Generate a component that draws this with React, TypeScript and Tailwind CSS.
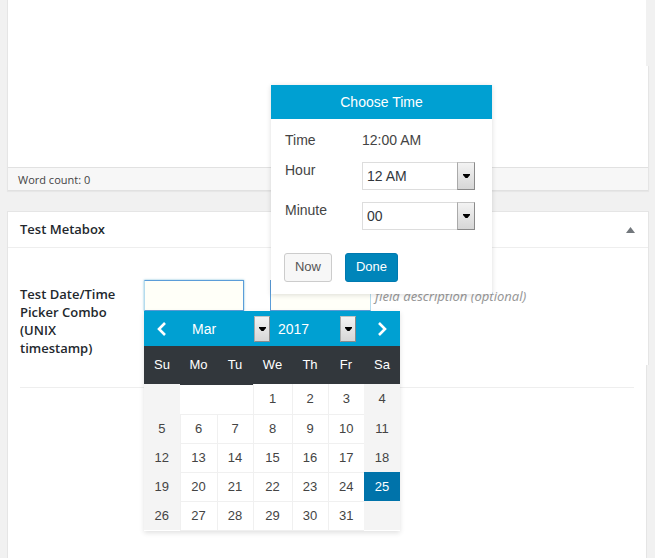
import React from "react";

const sans = "font-['Liberation_Sans',Arial,sans-serif]";

const weekdays = ["Su", "Mo", "Tu", "We", "Th", "Fr", "Sa"];
const weeks: (number | null)[][] = [
  [null, null, null, 1, 2, 3, 4],
  [5, 6, 7, 8, 9, 10, 11],
  [12, 13, 14, 15, 16, 17, 18],
  [19, 20, 21, 22, 23, 24, 25],
  [26, 27, 28, 29, 30, 31, null],
];

function DropButton({ tall }: { tall?: boolean }) {
  return (
    <span
      className={`pointer-events-none absolute right-0 top-0 flex h-full items-center justify-center border border-b-[#8a8a8a] border-l-[#aaa] border-r-[#8a8a8a] border-t-[#c4c4c4] bg-gradient-to-b from-[#f3f3f3] to-[#d6d6d6] ${
        tall ? "w-[18px]" : "w-4"
      }`}
    >
      <svg width="7" height="4" viewBox="0 0 7 4" aria-hidden="true">
        <path d="M0 0h7v1L4.500 4h-2L0 1z" fill="#000" />
      </svg>
    </span>
  );
}

function TimeSelect({ id, options }: { id: string; options: string[] }) {
  return (
    <div className="relative h-7 w-[113px]">
      <select
        id={id}
        className="h-full w-full appearance-none border border-[#ddd] bg-white pl-1 text-sm text-[#32373c] outline-none"
      >
        {options.map((option) => (
          <option key={option}>{option}</option>
        ))}
      </select>
      <DropButton tall />
    </div>
  );
}

function HeaderSelect({ label, options }: { label: string; options: string[] }) {
  return (
    <div className="relative h-[26px] w-[78px]">
      <select
        aria-label={label}
        className="h-full w-full appearance-none bg-transparent text-sm text-white outline-none"
      >
        {options.map((option) => (
          <option key={option}>{option}</option>
        ))}
      </select>
      <DropButton />
    </div>
  );
}

function Calendar() {
  return (
    <div
      className={`absolute left-0 top-full z-10 w-64 bg-white text-[#444] shadow-[0_2px_5px_rgba(0,0,0,0.12)] ${sans}`}
    >
      <div className="flex h-[35px] items-center bg-[#00a0d2] text-white">
        <button type="button" aria-label="Previous month" className="flex w-12 pl-3">
          <svg width="12" height="14" viewBox="0 0 12 14" fill="none" stroke="#fff" strokeWidth="2.600">
            <path d="M9 1 3 7l6 6" />
          </svg>
        </button>
        <div className="flex gap-2">
          <HeaderSelect label="Month" options={["Mar"]} />
          <HeaderSelect label="Year" options={["2017"]} />
        </div>
        <button type="button" aria-label="Next month" className="flex flex-1 justify-end pr-3">
          <svg width="12" height="14" viewBox="0 0 12 14" fill="none" stroke="#fff" strokeWidth="2.600">
            <path d="m3 1 6 6-6 6" />
          </svg>
        </button>
      </div>
      <table className="w-full table-fixed border-collapse text-center text-[13px]">
        <colgroup>
          <col className="w-9" />
          <col className="w-[37px]" />
          <col className="w-9" />
          <col className="w-[39px]" />
          <col className="w-9" />
          <col className="w-9" />
          <col className="w-9" />
        </colgroup>
        <thead>
          <tr className="h-[38px] bg-[#32373c] text-white">
            {weekdays.map((day) => (
              <th
                key={day}
                className={`p-0 font-normal ${
                  day === "Mo" || day === "Tu" ? "shadow-[0_1px_0_#32373c]" : ""
                }`}
              >
                {day}
              </th>
            ))}
          </tr>
        </thead>
        <tbody>
          {weeks.map((week, row) => (
            <tr key={row} className={row === 0 ? "h-[30px]" : "h-[29px]"}>
              {week.map((day, col) => {
                const weekend = col === 0 || col === 6;
                const tone =
                  day === 25
                    ? "bg-[#0073aa] text-white"
                    : weekend
                      ? "bg-[#f4f4f4]"
                      : day === null
                        ? "border-b border-[#f0f0f0]"
                        : "border-b border-l border-[#f0f0f0]";
                return (
                  <td key={col} className={`p-0 ${tone}`}>
                    {day !== null && (
                      <button type="button" className="block h-7 w-full">
                        {day}
                      </button>
                    )}
                  </td>
                );
              })}
            </tr>
          ))}
        </tbody>
      </table>
    </div>
  );
}

function TimePicker() {
  return (
    <div
      className={`absolute bottom-[17px] left-px z-20 w-[221px] bg-white text-sm text-[#444] shadow-[0_1px_5px_rgba(0,0,0,0.14)] ${sans}`}
    >
      <div className="flex h-[34px] items-center justify-center bg-[#00a0d2] text-white">
        Choose Time
      </div>
      <div className="px-[13px] pb-3 pt-3">
        <div className="grid grid-cols-[77px_113px] gap-y-3 pl-px">
          <span className="leading-[19px]">Time</span>
          <span className="leading-[19px]">12:00 AM</span>
          <label htmlFor="hour" className="leading-4">Hour</label>
          <TimeSelect id="hour" options={["12 AM"]} />
          <label htmlFor="minute" className="leading-4">Minute</label>
          <TimeSelect id="minute" options={["00"]} />
        </div>
        <div className="mt-[23px] flex gap-[13px] text-[13px]">
          <button
            type="button"
            className="h-[29px] w-12 rounded-[3px] border border-[#ccc] bg-[#f7f7f7] text-[#555]"
          >
            Now
          </button>
          <button
            type="button"
            className="h-[29px] w-[53px] rounded-[3px] border border-[#0079b0] bg-[#0085ba] text-white"
          >
            Done
          </button>
        </div>
      </div>
    </div>
  );
}

export default function App() {
  return (
    <div className="flex min-h-screen flex-col bg-[#f1f1f1] pl-[7px] font-['Open_Sans','Noto_Sans',sans-serif] text-[#23282d]">
      <section>
        <div className="mr-[9px] h-[66px] border-l border-[#e5e5e5] bg-white" />
        <div className="mr-1.5 border-x border-[#e5e5e5] bg-white shadow-[0_1px_1px_rgba(0,0,0,0.04)]">
          <div className="h-[101px]" />
          <footer className="h-6 border-y border-[#e1e1e1] bg-[#f7f7f7] pl-2.5 text-[11px] leading-6 text-[#444]">
            Word count: 0
          </footer>
        </div>
      </section>

      <section className="mt-5 flex flex-1 flex-col">
        <div className="mr-1.5 h-[154px] border-x border-t border-[#e5e5e5] bg-white">
          <header className="flex h-9 items-center justify-between border-b border-[#eee] pl-3 pr-[13px]">
            <h2 className="text-[13px] font-semibold">Test Metabox</h2>
            <button type="button" aria-label="Toggle panel">
              <svg width="9" height="6" viewBox="0 0 9 6" fill="#72777c">
                <path d="M4.500 0 9 6H0z" />
              </svg>
            </button>
          </header>
          <div className="flex pl-3 pt-8">
            <label
              htmlFor="date"
              className="mt-[5px] w-28 shrink-0 pr-3 text-[13px] font-semibold leading-[18px]"
            >
              Test Date/Time Picker Combo (UNIX timestamp)
            </label>
            <div className="ml-3 flex h-[31px] items-center">
              <div className="relative h-full">
                <input
                  id="date"
                  type="text"
                  className="h-full w-[100px] border border-[#5b9dd9] border-l-[#b5dcee] bg-[#fffff8] px-1 text-sm shadow-[0_0_2px_rgba(30,140,190,0.6)] outline-none"
                />
                <Calendar />
              </div>
              <div className="relative ml-[26px] h-full">
                <input
                  type="text"
                  aria-label="Time"
                  className="h-full w-[101px] border border-[#5b9dd9] border-r-[#b5dcee] bg-[#fffff8] px-1 text-sm outline-none"
                />
                <TimePicker />
              </div>
              <p className="ml-1 whitespace-nowrap pt-0.5 font-['Noto_Sans',sans-serif] text-[13px] italic text-[#999]">
                field description (optional)
              </p>
            </div>
          </div>
        </div>
        <div className="mr-2 flex-1 border-x border-[#e5e5e5] bg-white">
          <div className="ml-3 mr-3 h-[23px] border-b border-[#eee]" />
        </div>
      </section>
    </div>
  );
}
